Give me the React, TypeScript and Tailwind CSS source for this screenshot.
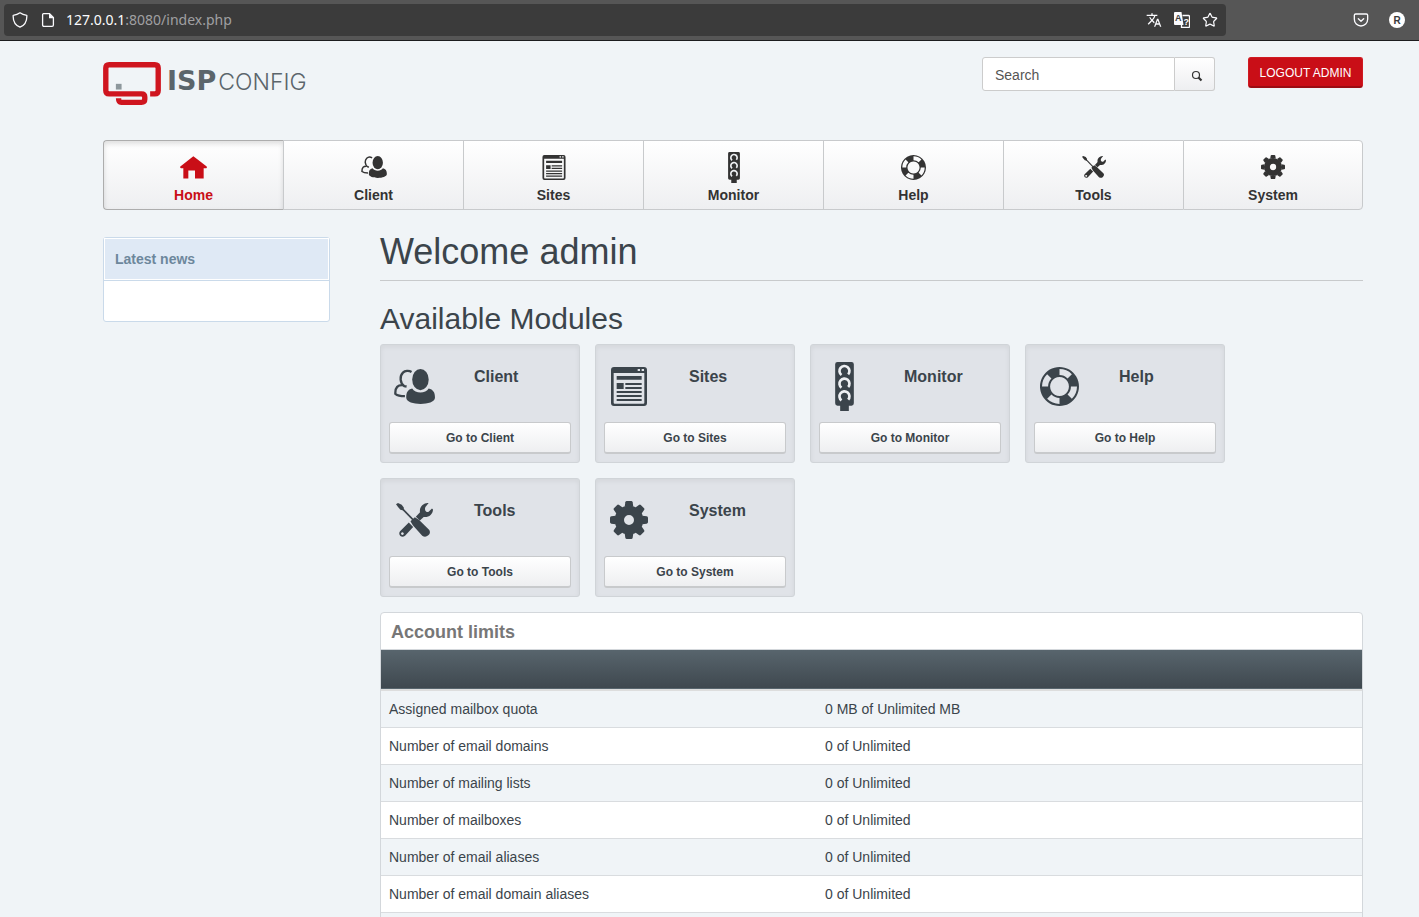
import type { ReactNode } from "react";
import { Pocket, Star } from "lucide-react";
import { MdTranslate } from "react-icons/md";

type IconProps = { className?: string };

// ─── Module icons ───────────────────────────────────────────────────────────
function HomeIcon({ className }: IconProps) {
  return (
    <svg viewBox="0 0 81 68" className={className} fill="currentColor" aria-hidden="true">
      <path d="M40 0 L56 12 L80 31 Q82 34 79 36 H71 V67 H45 V43 H25 V67 H10 V36 H3 Q-1 34 1 31 Z" />
    </svg>
  );
}

function ClientIcon({ className }: IconProps) {
  return (
    <svg viewBox="0 0 124 106" className={className} fill="currentColor" aria-hidden="true">
      <g fill="none" stroke="currentColor" strokeWidth="7">
        <path d="M53 9 C45 4 33 5 27 11 C16 22 18 42 31 52 L38 53" />
        <path d="M27 49 C12 48 3 55 4 75 C10 80 20 82 33 82" />
      </g>
      <ellipse cx="80" cy="32" rx="25" ry="32" />
      <path d="M37 87 C37 70 42 62 55 59 C64 75 96 75 105 59 C118 62 124 70 124 87 C123 112 38 112 37 87 Z" />
    </svg>
  );
}

function SitesIcon({ className }: IconProps) {
  return (
    <svg viewBox="0 0 108 117" className={className} fill="currentColor" aria-hidden="true">
      <path
        fillRule="evenodd"
        d="M9 0 H99 Q108 0 108 9 V108 Q108 117 99 117 H9 Q0 117 0 108 V9 Q0 0 9 0 Z M8 18 V107 Q8 110 11 110 H97 Q100 110 100 107 V18 Z M80 6 V12 H87 V6 Z M92 6 V12 H99 V6 Z"
      />
      <path d="M17 27 H92 V38 H17 Z M17 48 H38 V66 H17 Z M43 48 H92 V54 H43 Z M43 60 H92 V66 H43 Z M17 72 H92 V78 H17 Z M17 84 H92 V90 H17 Z M17 96 H92 V102 H17 Z" />
    </svg>
  );
}

function MonitorIcon({ className }: IconProps) {
  return (
    <svg viewBox="0 0 56 147" className={className} aria-hidden="true">
      <path d="M7 0 H49 Q56 0 56 7 V124 Q56 131 49 131 H41 V147 H15 V131 H7 Q0 131 0 124 V7 Q0 0 7 0 Z" fill="currentColor" />
      <g fill="none" stroke="#eef0f3" strokeWidth="8">
        <path d="M19 39 A15 15 0 1 1 39 37" />
        <path d="M19 77 A15 15 0 1 1 39 75" />
        <path d="M19 115 A15 15 0 1 1 39 113" />
      </g>
    </svg>
  );
}

function HelpIcon({ className }: IconProps) {
  return (
    <svg viewBox="0 0 116 116" className={className} fill="currentColor" aria-hidden="true">
      <path
        fillRule="evenodd"
        d="M58 0 A58 58 0 1 1 57.9 0 Z M58 30 A28 28 0 1 0 58.1 30 Z
          M58 6 A52 52 0 0 1 94.8 21.2 L82 34 A34 34 0 0 0 58 24 Z
          M110 58 A52 52 0 0 1 94.8 94.8 L82 82 A34 34 0 0 0 92 58 Z
          M58 110 A52 52 0 0 1 21.2 94.8 L34 82 A34 34 0 0 0 58 92 Z
          M6 58 A52 52 0 0 1 21.2 21.2 L34 34 A34 34 0 0 0 24 58 Z"
      />
    </svg>
  );
}

function ToolsIcon({ className }: IconProps) {
  return (
    <svg viewBox="0 0 110 101" className={className} aria-hidden="true">
      <g fill="currentColor">
        <path d="M0 4 L6 0 L17 5 L23 13 L23 22 L13 20 L6 12 Z" />
        <path d="M43 54 L56 42 L68 50 L99 80 Q104 89 96 96 Q87 104 78 97 L50 66 Z" />
        <path fillRule="evenodd" d="M38 58 L51 71 L27 97 Q20 103 13 98 Q7 91 12 84 Z M19 87 A4 4 0 1 0 19.1 87 Z" />
        <path d="M59 41 L72 27 L84 40 L71 52 Z" />
        <path d="M97 0 C84 -1 70 9 71 25 L72 34 L80 41 C95 45 110 34 110 19 L107 16 L97 26 Q90 28 87 22 Q85 16 88 11 Z" />
      </g>
      <path d="M18 16 L54 53" fill="none" stroke="currentColor" strokeWidth="5" />
    </svg>
  );
}

const TEETH = [0, 45, 90, 135, 180, 225, 270, 315];

function SystemIcon({ className }: IconProps) {
  return (
    <svg viewBox="-57 -57 114 114" className={className} fill="currentColor" aria-hidden="true">
      <circle r="29" fill="none" stroke="currentColor" strokeWidth="28" />
      {TEETH.map(angle => (
        <path
          key={angle}
          d="M-13 -40 L-11 -53 Q-10 -57 -7 -57 H7 Q10 -57 11 -53 L13 -40 Z"
          transform={`rotate(${angle})`}
        />
      ))}
    </svg>
  );
}

type Module = {
  name: string;
  icon: (props: IconProps) => ReactNode;
  navSize: string;
  tileSize: string;
};

const MODULES: Module[] = [
  { name: "Client",  icon: ClientIcon,  navSize: "w-[26px] h-[22px]", tileSize: "w-[41px] h-[35px]" },
  { name: "Sites",   icon: SitesIcon,   navSize: "w-6 h-[25px]",      tileSize: "w-9 h-[39px]"      },
  { name: "Monitor", icon: MonitorIcon, navSize: "w-3 h-[31px]",      tileSize: "w-[19px] h-[49px]" },
  { name: "Help",    icon: HelpIcon,    navSize: "w-[25px] h-[25px]", tileSize: "w-[39px] h-[39px]" },
  { name: "Tools",   icon: ToolsIcon,   navSize: "w-6 h-[22px]",      tileSize: "w-[37px] h-[34px]" },
  { name: "System",  icon: SystemIcon,  navSize: "w-6 h-6",           tileSize: "w-[38px] h-[38px]" },
];

const NAV: Module[] = [
  { name: "Home", icon: HomeIcon, navSize: "w-[27px] h-[23px]", tileSize: "" },
  ...MODULES,
];

const LIMITS = [
  { label: "Assigned mailbox quota",         value: "0 MB of Unlimited MB" },
  { label: "Number of email domains",        value: "0 of Unlimited" },
  { label: "Number of mailing lists",        value: "0 of Unlimited" },
  { label: "Number of mailboxes",            value: "0 of Unlimited" },
  { label: "Number of email aliases",        value: "0 of Unlimited" },
  { label: "Number of email domain aliases", value: "0 of Unlimited" },
  { label: "",                               value: "" },
];

// ─── Browser toolbar ────────────────────────────────────────────────────────
function BrowserBar() {
  return (
    <div className="flex h-[41px] shrink-0 items-center border-b border-[#1c1c1e] bg-[#565656] pl-1 pr-3.5 text-[#fbfbfe]">
      <div className="flex h-8 flex-1 items-center rounded bg-[#3b3b3b] px-2">
        <svg viewBox="0 0 16 16" className="h-4 w-4" fill="none" stroke="currentColor" strokeWidth="1.3" strokeLinejoin="round" aria-hidden="true">
          <path d="M8 .8 C6 2.4 3.6 3.1 1.2 3.3 C.9 8.6 2.8 13 8 15.2 C13.2 13 15.1 8.6 14.8 3.3 C12.4 3.1 10 2.4 8 .8 Z" />
        </svg>
        <svg viewBox="0 0 16 16" className="ml-3 h-4 w-4" aria-hidden="true">
          <path d="M3.5 1.7 H9.5 L13.4 5.6 V13 Q13.4 14.4 12 14.4 H4 Q2.6 14.4 2.6 13 V3 Q2.6 1.7 3.5 1.7 Z" fill="none" stroke="currentColor" strokeWidth="1.3" />
          <path d="M9 1.5 L13.8 6.3 H9 Z" fill="currentColor" />
        </svg>
        <span className="ml-2.5 font-['Noto_Sans',sans-serif] text-sm text-[#a0a0a2]">
          <span className="text-[#fbfbfe]">127.0.0.1</span>:8080/index.php
        </span>
        <div className="ml-auto flex items-center gap-3">
          <MdTranslate className="h-4 w-4" />
          <svg viewBox="0 0 16 16" className="h-4 w-4" aria-hidden="true">
            <path d="M1 0 H7.5 L9.5 13 H1 Q0 13 0 12 V1 Q0 0 1 0 Z" fill="currentColor" />
            <path d="M8.5 3.5 H14.5 Q15.5 3.5 15.5 4.5 V14.5 Q15.5 15.5 14.5 15.5 H7.5 V13" fill="none" stroke="currentColor" strokeWidth="1.3" />
            <text x="1" y="9" fontSize="9" fontWeight="700" fill="#3b3b3b" fontFamily="Liberation Sans">A</text>
            <text x="9.5" y="13" fontSize="9" fontWeight="700" fill="currentColor" fontFamily="Liberation Sans">?</text>
          </svg>
          <Star className="h-4 w-4" strokeWidth={1.8} />
        </div>
      </div>
      <Pocket className="ml-[127px] h-4 w-4" strokeWidth={2} />
      <span className="ml-5 flex h-4 w-4 items-center justify-center rounded-full bg-white text-[10px] font-bold text-[#3b3b3b]">
        R
      </span>
    </div>
  );
}

function Logo() {
  return (
    <a href="#home" className="mt-[5px] flex h-[43px] text-[#5b656b]">
      <svg viewBox="0 0 172 128" className="h-[43px] w-[58px]" aria-hidden="true">
        <path
          d="M140 95 H154 Q164 95 164 85 V18 Q164 8 154 8 H18 Q8 8 8 18 V85 Q8 95 18 95 H114 Q124 95 124 104 V111 Q124 120 114 120 H54 Q46 120 46 108"
          fill="none"
          stroke="#cf151f"
          strokeWidth="16"
        />
        <rect x="38" y="65" width="17" height="17" fill="#8d979c" />
      </svg>
      <span className="ml-1.5 flex h-[38px] items-baseline leading-[38px]">
        <span className="font-['DejaVu_Sans',sans-serif] text-[27px] font-bold">ISP</span>
        <span className="ml-0.5 font-[Inter,sans-serif] text-[23px] font-light">CONFIG</span>
      </span>
    </a>
  );
}

function Header() {
  return (
    <header className="mb-[35px] flex items-start pt-4">
      <Logo />
      <form className="ml-auto flex h-[34px]" onSubmit={e => e.preventDefault()}>
        <input
          type="text"
          aria-label="Search"
          placeholder="Search"
          className="w-[193px] rounded-l-[3px] border border-[#ccc] bg-white px-3 pt-0.5 text-sm placeholder:text-[#555]"
        />
        <button
          type="submit"
          aria-label="Start search"
          className="flex w-10 items-center justify-center rounded-r-[3px] border border-l-0 border-[#ccc] bg-linear-to-b from-white to-[#eeeff1] pl-1 pt-1 text-[#333]"
        >
          <svg viewBox="0 0 12 12" className="h-3 w-3" fill="none" stroke="currentColor" aria-hidden="true">
            <circle cx="5" cy="5" r="3.5" strokeWidth="1.2" />
            <path d="M7.5 7.5 L10.5 10.5" strokeWidth="2.2" />
          </svg>
        </button>
      </form>
      <button className="ml-[33px] h-[31px] w-[115px] rounded-[3px] border border-b-2 border-[#d01a22] border-b-[#9c0c13] bg-[#c90e17] pt-px text-xs text-white">
        LOGOUT ADMIN
      </button>
    </header>
  );
}

function MainNav() {
  return (
    <nav className="grid grid-cols-7">
      {NAV.map(({ name, icon: Icon, navSize }, i) => (
        <a
          key={name}
          href={`#${name.toLowerCase()}`}
          className={`flex h-[70px] flex-col items-center border-y border-l bg-linear-to-b from-white to-[#eeeff1] pt-2.5 text-sm font-bold ${
            i === 0
              ? "rounded-l border-[#adadad] text-[#c90e17] shadow-[inset_0_3px_5px_rgba(0,0,0,0.125)]"
              : "border-[#c8cacc] text-[#333]"
          } ${i === NAV.length - 1 ? "rounded-r border-r" : ""}`}
        >
          <span className="flex h-8 items-center">
            <Icon className={navSize} />
          </span>
          <span className="mt-0.5 leading-5">{name}</span>
        </a>
      ))}
    </nav>
  );
}

function ModuleTile({ name, icon: Icon, tileSize }: Module) {
  return (
    <section className="w-[200px] rounded-[3px] border border-[#d0d4d8] bg-[#e0e3e8] p-2 shadow-[inset_0_2px_5px_rgba(0,0,0,0.06)]">
      <div className="flex h-[69px]">
        <div className="flex h-[66px] w-[50px] items-center justify-center">
          <Icon className={`shrink-0 ${tileSize}`} />
        </div>
        <h3 className="pl-[35px] pt-3.5 text-base leading-5 font-bold">{name}</h3>
      </div>
      <button className="h-8 w-full rounded-[3px] border border-b-2 border-[#c8cacc] bg-linear-to-b from-white to-[#eeeff1] text-xs font-bold">
        Go to {name}
      </button>
    </section>
  );
}

function AccountLimits() {
  return (
    <div className="mt-[15px] rounded-t border border-[#d3d7db] bg-white">
      <table className="w-full table-fixed text-left text-sm leading-5">
        <caption className="h-[37px] border-b border-[#d3d7db] pl-2.5 pt-px text-left text-lg leading-9 font-bold text-[#777]">
          Account limits
        </caption>
        <thead>
          <tr className="h-10 border-b-2 border-[#ddd] bg-linear-to-b from-[#58656d] to-[#3f484f]">
            <td className="w-4/9" />
            <td />
          </tr>
        </thead>
        <tbody>
          {LIMITS.map(row => (
            <tr key={row.label} className="h-[37px] border-b border-[#d9dcdf] odd:bg-[#f0f4f7]">
              <td className="px-2">{row.label}</td>
              <td className="px-2">{row.value}</td>
            </tr>
          ))}
        </tbody>
      </table>
    </div>
  );
}

export default function App() {
  return (
    <div className="flex h-screen flex-col bg-[#f0f4f7] font-['Liberation_Sans',Arial,sans-serif] text-[#3b444b]">
      <BrowserBar />
      <div className="min-h-0 flex-1 overflow-hidden pl-[103px] pr-14">
        <Header />
        <MainNav />
        <div className="mt-[22px] flex items-start gap-[50px]">
          <aside className="mt-[5px] w-[227px] shrink-0 rounded-[3px] border border-[#cadaea] bg-white">
            <div className="border-b border-[#cadaea]">
              <h2 className="border border-white bg-[#dfe9f5] px-2.5 py-2.5 text-sm leading-5 font-bold text-[#6d879c]">
                Latest news
              </h2>
            </div>
            <div className="h-10" />
          </aside>
          <main className="min-w-0 flex-1">
            <h1 className="border-b border-[#c8cacc] pb-2 text-4xl leading-10">Welcome admin</h1>
            <h2 className="mt-[21px] mb-[9px] text-3xl leading-[33px]">Available Modules</h2>
            <div className="flex flex-wrap gap-[15px]">
              {MODULES.map(m => (
                <ModuleTile key={m.name} {...m} />
              ))}
            </div>
            <AccountLimits />
          </main>
        </div>
      </div>
    </div>
  );
}
